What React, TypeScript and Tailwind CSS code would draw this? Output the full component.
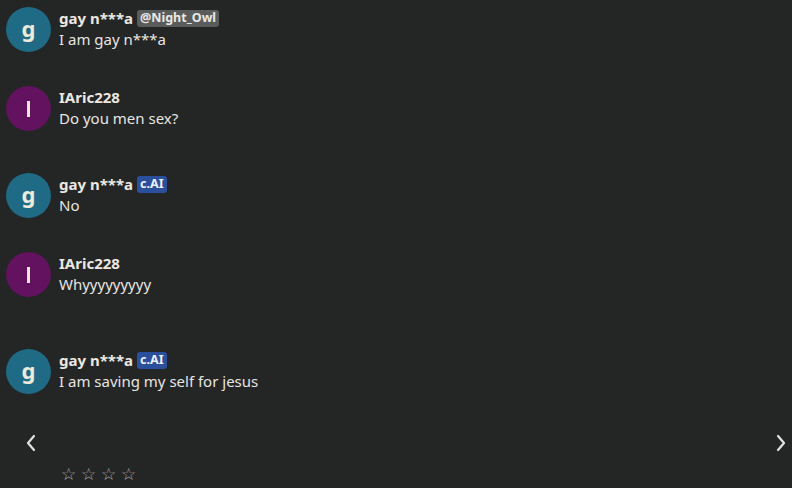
import React from 'react';

type Msg = {
  name: string;
  initial: string;
  avatar: string;
  badge?: { text: string; cls: string };
  text: string;
  gap: string;
};

const messages: Msg[] = [
  { name: 'gay n***a', initial: 'g', avatar: 'bg-[#1f6a85]', badge: { text: '@Night_Owl', cls: 'bg-[#595c5b] text-[#e8e8e8]' }, text: 'I am gay n***a', gap: 'mt-[7px]' },
  { name: 'IAric228', initial: 'I', avatar: 'bg-[#62125f]', text: 'Do you men sex?', gap: 'mt-[34px]' },
  { name: 'gay n***a', initial: 'g', avatar: 'bg-[#1f6a85]', badge: { text: 'c.AI', cls: 'bg-[#2a4f9e] text-[#eef2ff]' }, text: 'No', gap: 'mt-[42px]' },
  { name: 'IAric228', initial: 'I', avatar: 'bg-[#62125f]', text: 'Whyyyyyyyyy', gap: 'mt-[34px]' },
  { name: 'gay n***a', initial: 'g', avatar: 'bg-[#1f6a85]', badge: { text: 'c.AI', cls: 'bg-[#2a4f9e] text-[#eef2ff]' }, text: 'I am saving my self for jesus', gap: 'mt-[52px]' },
];

const Row = ({ m }: { m: Msg }) => (
  <div className={`flex items-start gap-2 pl-[6px] h-[45px] ${m.gap}`}>
    <div className={`w-[45px] h-[45px] shrink-0 rounded-full ${m.avatar} flex items-center justify-center text-[22px] font-bold text-[#f0ead8] leading-none`}>
      {m.initial === 'I' ? (
        <span className="block w-[3px] h-[16px] bg-[#f0ead8]" />
      ) : (
        <span className="-mt-[3px]">{m.initial}</span>
      )}
    </div>
    <div className="flex flex-col pt-[1px]">
      <div className="flex items-center gap-[4px] h-[21px]">
        <span className="text-[15px] font-bold text-[#ece8e0]">{m.name}</span>
        {m.badge && (
          <span className={`text-[12.5px] font-bold leading-none px-[3px] py-[2px] rounded-[3px] ${m.badge.cls}`}>{m.badge.text}</span>
        )}
      </div>
      <div className="text-[15px] leading-[21px] text-[#e8e6e2]">{m.text}</div>
    </div>
  </div>
);

const Chevron = ({ dir }: { dir: 'left' | 'right' }) => (
  <svg width="12" height="18" viewBox="0 0 12 18" fill="none" stroke="#e2e2e2" strokeWidth="2.2" strokeLinecap="round" strokeLinejoin="round">
    {dir === 'left' ? <path d="M9 2 L3 9 L9 16" /> : <path d="M3 2 L9 9 L3 16" />}
  </svg>
);

export default function App() {
  return (
    <div className="w-[792px] h-[488px] overflow-hidden bg-[#242525] flex flex-col" style={{ fontFamily: '"Noto Sans", "Open Sans", sans-serif' }}>
      {messages.map((m, i) => (
        <Row key={i} m={m} />
      ))}
      <div className="flex justify-between items-center mt-[40px] pl-[25px] pr-[5px]">
        <Chevron dir="left" />
        <Chevron dir="right" />
      </div>
      <div className="flex gap-[5px] pl-[61px] mt-[13px] text-[17px] leading-none text-[#a8a8a8]">
        <span>☆</span>
        <span>☆</span>
        <span>☆</span>
        <span>☆</span>
      </div>
    </div>
  );
}
